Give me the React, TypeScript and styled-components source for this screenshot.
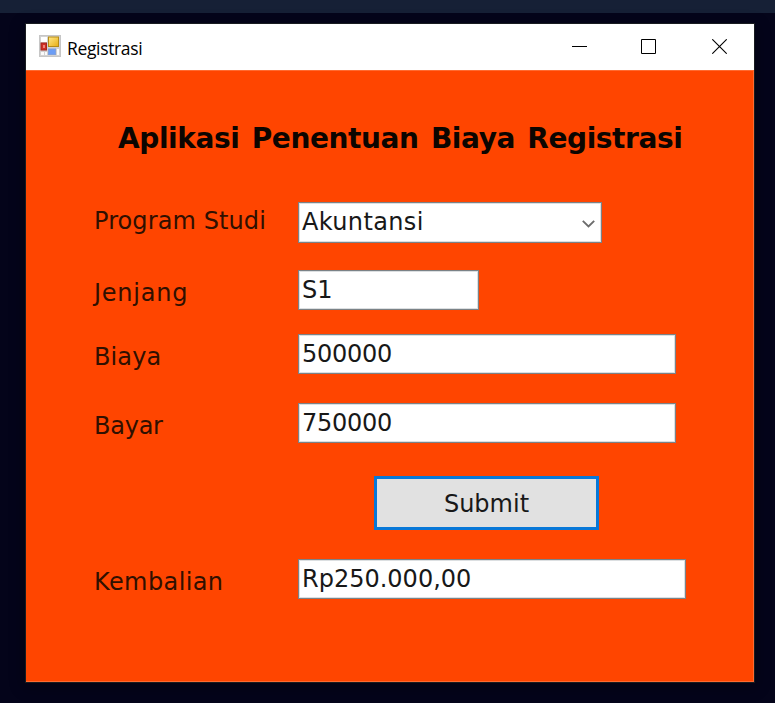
import React from 'react';
import styled, { createGlobalStyle } from 'styled-components';

const GlobalStyle = createGlobalStyle`
  * { box-sizing: border-box; }
  body { margin: 0; background: #04041a; overflow: hidden; }
`;

const Desktop = styled.div`
  width: 775px;
  height: 703px;
  background: #04041a;
`;

const TopStrip = styled.div`
  height: 13px;
  background: #162036;
`;

const Window = styled.main`
  width: 728px;
  height: 658px;
  margin: 11px 0 0 26px;
  box-shadow: 0 0 0 1px #191c20, 0 3px 14px 2px rgba(0, 0, 0, 0.3);
`;

const TitleBar = styled.header`
  height: 46px;
  padding-left: 13px;
  display: flex;
  align-items: flex-start;
  background: #fff;
`;

const WindowTitle = styled.span`
  flex: 1;
  margin: 12px 0 0 6px;
  font: 17.5px/24px "Open Sans", sans-serif;
  letter-spacing: -0.35px;
  color: #000;
`;

const CaptionButton = styled.button<{ $width: number }>`
  width: ${(p) => p.$width}px;
  height: 45px;
  padding: 0;
  border: 0;
  background: none;
  display: flex;
  align-items: center;
  justify-content: center;
`;

const Client = styled.section`
  height: 612px;
  padding: 49px 0 0 68px;
  background: #ff4500;
  border: 1px solid #ff6a30;
  border-left: 0;
  font-family: "DejaVu Sans", Verdana, sans-serif;
`;

const Heading = styled.h1`
  margin: 0 0 0 24px;
  height: 82px;
  padding-top: 1px;
  font-size: 28px;
  line-height: 36px;
  font-weight: 700;
  white-space: nowrap;
  letter-spacing: -0.4px;
  word-spacing: 2.9px;
  color: #0c0500;
`;

const Row = styled.div<{ $height: number; $gap: number }>`
  display: flex;
  height: ${(p) => p.$height}px;
  margin-bottom: ${(p) => p.$gap}px;
`;

const Label = styled.label<{ $top: number; $spacing: number }>`
  width: 204px;
  padding-top: ${(p) => p.$top}px;
  font-size: 24px;
  line-height: 30px;
  letter-spacing: ${(p) => p.$spacing}px;
  white-space: nowrap;
  color: #301000;
`;

const Field = styled.div<{ $width: number; $spacing: number }>`
  width: ${(p) => p.$width}px;
  height: 100%;
  padding: 4px 6px 0 3px;
  display: flex;
  justify-content: space-between;
  background: #fff;
  border: 1px solid #7b8287;
  box-shadow: inset 0 0 0 1px #dcdfe1;
  font-size: 24px;
  line-height: 30px;
  letter-spacing: ${(p) => p.$spacing}px;
  white-space: nowrap;
  color: #181818;
`;

const SubmitButton = styled.button`
  width: 225px;
  height: 54px;
  margin-left: 280px;
  padding: 2px 0 0;
  background: #e1e1e1;
  border: 3px solid #0878d8;
  font: 24px/30px "DejaVu Sans", Verdana, sans-serif;
  color: #181818;
`;

const AppIconSvg = styled.svg`
  margin-top: 11px;
`;

const AppIcon = () => (
  <AppIconSvg width="22" height="22" viewBox="0 0 22 22">
    <defs>
      <linearGradient id="gold" x1="0" y1="0" x2="1" y2="1">
        <stop offset="0" stopColor="#ffe88a" />
        <stop offset="1" stopColor="#e9ae10" />
      </linearGradient>
    </defs>
    <rect x="0.5" y="0.5" width="21" height="21" fill="#d2d2d2" stroke="#c6c6c6" />
    <rect x="2" y="2" width="6" height="5" fill="#fff" />
    <rect x="2" y="17" width="3" height="3" fill="#fafafa" />
    <rect x="6" y="17" width="2" height="3" fill="#fafafa" />
    <rect x="18" y="14" width="2" height="6" fill="#fafafa" />
    <rect x="9.5" y="2" width="10" height="9.5" fill="url(#gold)" stroke="#b58b16" />
    <rect x="2" y="8" width="5.5" height="7" fill="#cf2e25" stroke="#a32620" />
    <rect x="4" y="10" width="2" height="3" fill="#ee8277" />
    <rect x="9.5" y="14" width="7" height="5.5" fill="#6b9df5" stroke="#7fa0dc" />
  </AppIconSvg>
);

const Minimize = () => (
  <svg width="15" height="15" viewBox="0 0 15 15"><path d="M0 7.5H15" stroke="#000" /></svg>
);
const Maximize = () => (
  <svg width="15" height="15" viewBox="0 0 15 15"><path d="M.5.5H14.5V14.5H.5Z" fill="none" stroke="#000" /></svg>
);
const Close = () => (
  <svg width="15" height="15" viewBox="0 0 15 15"><path d="M.3.3 14.7 14.7M14.7.3.3 14.7" stroke="#000" strokeWidth="1.1" /></svg>
);
const Chevron = () => (
  <svg width="13" height="8" viewBox="0 0 13 8">
    <path d="M.8.9 6.5 6.4 12.2.9" fill="none" stroke="#6c6c6c" strokeWidth="1.9" />
  </svg>
);

const ChevronSlot = styled.span`
  display: flex;
  padding-top: 13px;
  height: 30px;
`;

const rows = [
  { label: 'Program Studi', value: 'Akuntansi', height: 41, gap: 27, width: 304, top: 4, ls: 0.1, vs: 0.35, combo: true },
  { label: 'Jenjang', value: 'S1', height: 40, gap: 24, width: 181, top: 8, ls: 0.75, vs: 0 },
  { label: 'Biaya', value: '500000', height: 40, gap: 29, width: 378, top: 8, ls: 0.1, vs: -0.25 },
  { label: 'Bayar', value: '750000', height: 40, gap: 33, width: 378, top: 8, ls: -0.25, vs: -0.25 },
];

export default function App() {
  return (
    <>
      <GlobalStyle />
      <Desktop>
        <TopStrip />
        <Window>
          <TitleBar>
            <AppIcon />
            <WindowTitle>Registrasi</WindowTitle>
            <CaptionButton $width={65} aria-label="Minimize"><Minimize /></CaptionButton>
            <CaptionButton $width={73} aria-label="Maximize"><Maximize /></CaptionButton>
            <CaptionButton $width={69} aria-label="Close"><Close /></CaptionButton>
          </TitleBar>
          <Client>
            <Heading>Aplikasi Penentuan Biaya Registrasi</Heading>
            {rows.map((r) => (
              <Row key={r.label} $height={r.height} $gap={r.gap}>
                <Label $top={r.top} $spacing={r.ls}>{r.label}</Label>
                <Field $width={r.width} $spacing={r.vs}>
                  {r.value}
                  {r.combo && <ChevronSlot><Chevron /></ChevronSlot>}
                </Field>
              </Row>
            ))}
            <Row $height={54} $gap={29}>
              <SubmitButton>Submit</SubmitButton>
            </Row>
            <Row $height={40} $gap={0}>
              <Label $top={8} $spacing={0.4}>Kembalian</Label>
              <Field $width={388} $spacing={0}>Rp250.000,00</Field>
            </Row>
          </Client>
        </Window>
      </Desktop>
    </>
  );
}
